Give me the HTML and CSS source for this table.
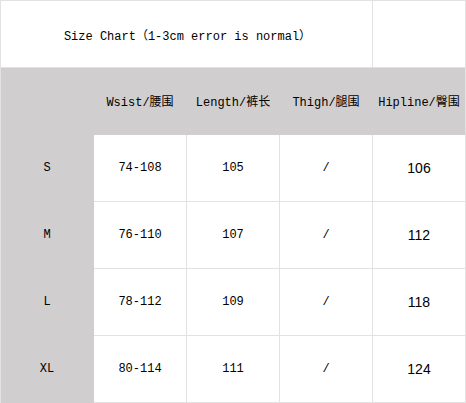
FILE: index.html
```html
<!DOCTYPE html>
<html>
<head>
<meta charset="utf-8">
<link rel="stylesheet" href="styles.css">
</head>
<body>
<table class="chart">
  <colgroup>
    <col class="col">
    <col class="col">
    <col class="col">
    <col class="col">
    <col class="col">
  </colgroup>
  <tr class="title-row">
    <td colspan="4" class="title">Size Chart（1-3cm error is normal）</td>
    <td></td>
  </tr>
  <tr class="head-row">
    <td class="gray"></td>
    <td class="gray">Wsist/腰围</td>
    <td class="gray">Length/裤长</td>
    <td class="gray">Thigh/腿围</td>
    <td class="gray">Hipline/臀围</td>
  </tr>
  <tr>
    <td class="gray">S</td>
    <td>74-108</td>
    <td>105</td>
    <td>/</td>
    <td class="num">106</td>
  </tr>
  <tr>
    <td class="gray">M</td>
    <td>76-110</td>
    <td>107</td>
    <td>/</td>
    <td class="num">112</td>
  </tr>
  <tr>
    <td class="gray">L</td>
    <td>78-112</td>
    <td>109</td>
    <td>/</td>
    <td class="num">118</td>
  </tr>
  <tr>
    <td class="gray">XL</td>
    <td>80-114</td>
    <td>111</td>
    <td>/</td>
    <td class="num">124</td>
  </tr>
</table>
</body>
</html>
```
FILE: styles.css
```css
html, body {
  margin: 0;
  padding: 0;
  background: #ffffff;
}

.chart {
  border-collapse: separate;
  border-spacing: 0;
  border-top: 1px solid #e2e2e2;
  border-left: 1px solid #e2e2e2;
  table-layout: fixed;
  width: 466px;
  font-family: "Liberation Mono", "Noto Sans CJK SC", monospace;
  font-size: 12px;
  color: #000;
}

.chart .col {
  width: 93px;
}

.chart td {
  height: 66px;
  padding: 0;
  text-align: center;
  vertical-align: middle;
  border-right: 1px solid #e2e2e2;
  border-bottom: 1px solid #e2e2e2;
  white-space: nowrap;
}

.chart .title {
  padding-top: 1px;
  padding-left: 2px;
  height: 65px;
}

.chart .gray {
  background: #d0cecf;
  border-color: #d0cecf;
}

.head-row .gray:last-child {
  border-right-color: #e2e2e2;
}

.chart .num {
  font-family: "Liberation Sans", Arial, sans-serif;
  font-size: 14px;
}
```
